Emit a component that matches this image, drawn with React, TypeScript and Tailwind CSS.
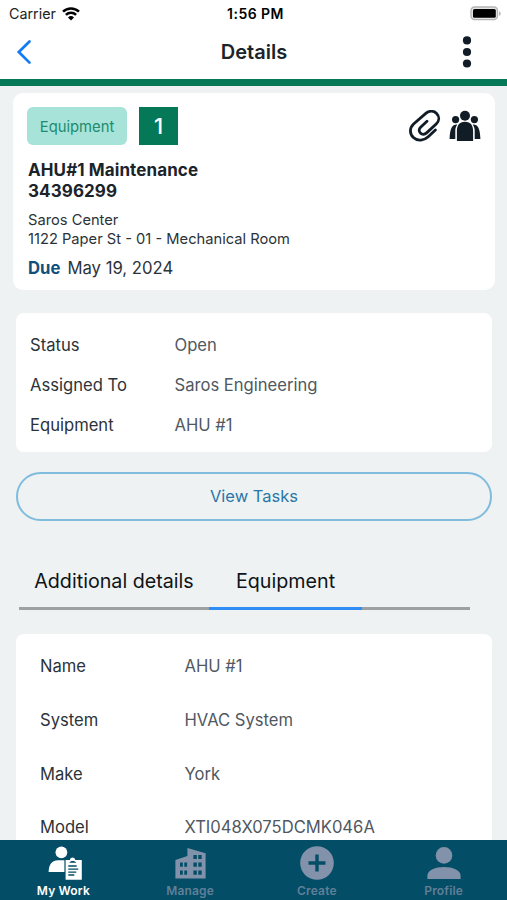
import React from "react";

const summary: [string, string][] = [
  ["Status", "Open"],
  ["Assigned To", "Saros Engineering"],
  ["Equipment", "AHU #1"],
];

const equipment: [string, string][] = [
  ["Name", "AHU #1"],
  ["System", "HVAC System"],
  ["Make", "York"],
  ["Model", "XTI048X075DCMK046A"],
];

function WifiIcon() {
  return (
    <svg className="h-[14px] w-[18px]" viewBox="0 0 18 14" fill="none" stroke="#000" strokeWidth="2.5">
      <path d="M1 4.7a11.4 11.4 0 0 1 16 0" />
      <path d="M3.9 7.9a7.3 7.3 0 0 1 10.2 0" />
      <path d="M9 13.4 6 10.4a4.3 4.3 0 0 1 6 0z" fill="#000" stroke="none" />
    </svg>
  );
}

function BatteryIcon() {
  return (
    <svg className="h-[15px] w-[32px]" viewBox="0 0 32 15">
      <rect x="1" y="1" width="26.5" height="12.6" rx="3.6" fill="#e4e4e4" stroke="#b4b4b4" strokeWidth="1.3" />
      <rect x="3" y="3" width="22.8" height="8.8" rx="1.6" fill="#000" />
      <path d="M29 5.2c2.2.8 2.2 3.8 0 4.6z" fill="#b4b4b4" />
    </svg>
  );
}

function PaperclipIcon() {
  return (
    <svg className="h-[33px] w-[33px]" viewBox="4 4 33 33" fill="none" stroke="#111c26" strokeWidth="2.8" strokeLinecap="round">
      <path d="M31.4 24 24.2 30.7C20.4 34.3 13.7 35.8 9.4 31.6C5.2 27.5 5.6 21.8 9.6 18L21.8 7.4C25.3 4.4 29.8 4.6 32.6 7.4C35.6 10.5 35.4 14.9 32.2 18L22.6 26.9C20.7 28.6 18 28.7 16.4 27.1C14.7 25.4 14.8 22.9 16.6 21.2L23 15.3" />
    </svg>
  );
}

function TeamIcon() {
  return (
    <svg className="h-[32px] w-[32px]" viewBox="0 0 32 32" fill="#111c26">
      <circle cx="16" cy="5.7" r="5" />
      <circle cx="6.6" cy="9.6" r="3.6" />
      <circle cx="25.4" cy="9.6" r="3.6" />
      <path d="M16 11.7c5.8 0 8.1 3.7 8.1 9.4V31H7.9v-9.9c0-5.7 2.3-9.4 8.1-9.4z" />
      <path d="M8.3 14.4C3.3 14.1.9 17.8.6 28.9h5.7v-8c0-2.8.7-4.6 2-6.5zM23.7 14.4c5-.3 7.4 3.4 7.7 14.5h-5.7v-8c0-2.8-.7-4.6-2-6.5z" />
    </svg>
  );
}

function WorkIcon() {
  return (
    <svg className="ml-[3px] h-[36px] w-[36px]" viewBox="0 0 36 36">
      <circle cx="14.4" cy="8.3" r="5.9" fill="#fff" />
      <path d="M1.6 28c0-7.5 3.6-11.8 9.4-11.8h7V28z" fill="#fff" />
      <path d="M17.4 14.7h17.7v21.8H17.4z" fill="#034d66" />
      <path d="M18.6 16h4.2c1-3.2 4.5-3.2 5.5 0h6.5v19.8H18.6z" fill="#fff" />
      <path d="M22.3 18.8c1.1-2.4 5.8-2.4 7 0z" fill="#034d66" />
      <path d="M21.3 22h8.4M21.3 25.1h10M21.3 28.1h8M21.3 31h6" fill="none" stroke="#034d66" strokeWidth="1.4" />
    </svg>
  );
}

function BuildingIcon() {
  return (
    <svg className="h-[36px] w-[36px]" viewBox="0 0 36 36">
      <path d="M3.4 34.6V16L15.4 12V4l18.2 5.2v25.4z" fill="#8292aa" />
      <path d="M8 18.6h2.8v4.2H8zM12.3 18.6h2.8v4.2h-2.8zM8 26.6h2.8v4.2H8zM12.3 26.6h2.8v4.2h-2.8zM21.4 11h3.4v4h-3.4zM26.3 11h3.4v4h-3.4zM21.4 18.6h3.4v4.2h-3.4zM26.3 18.6h3.4v4.2h-3.4zM21.4 26.6h3.4v4.2h-3.4zM26.3 26.6h3.4v4.2h-3.4z" fill="#034d66" />
    </svg>
  );
}

function CreateIcon() {
  return (
    <svg className="h-[36px] w-[36px]" viewBox="0 0 36 36">
      <circle cx="18" cy="19" r="16.8" fill="#8292aa" />
      <path d="M18 10.5v17M9.5 19h17" stroke="#034d66" strokeWidth="3.4" />
    </svg>
  );
}

function ProfileIcon() {
  return (
    <svg className="h-[36px] w-[36px]" viewBox="0 0 36 36" fill="#8292aa">
      <circle cx="18" cy="11.4" r="8.3" />
      <path d="M1.4 35v-3.3c0-5.5 8-8.7 16.6-8.7s16.6 3.2 16.6 8.7V35z" />
    </svg>
  );
}

function Rows({ items, height }: { items: [string, string][]; height: string }) {
  return (
    <>
      {items.map(([label, value]) => (
        <div key={label} className={`flex items-center text-[16.6px] ${height}`}>
          <span className="w-[144.5px] text-[#2b3339]">{label}</span>
          <span className="text-[#505861]">{value}</span>
        </div>
      ))}
    </>
  );
}

const tabs = [
  { label: "My Work", Icon: WorkIcon, active: true },
  { label: "Manage", Icon: BuildingIcon, active: false },
  { label: "Create", Icon: CreateIcon, active: false },
  { label: "Profile", Icon: ProfileIcon, active: false },
];

export default function App() {
  return (
    <div className="flex h-[900px] w-[507px] flex-col overflow-hidden bg-[#eef2f3] font-['Inter',sans-serif] text-[#1b232b]">
      <header className="h-[86px] shrink-0 border-b-[7px] border-[#047857] bg-white">
        <div className="grid h-[27px] grid-cols-3 items-center pl-[9px] pr-[5px]">
          <div className="flex items-center gap-[6px] text-[14.3px] text-[#222]">
            <span>Carrier</span>
            <WifiIcon />
          </div>
          <span className="text-center text-[14px] font-semibold tracking-[0.45px] text-black">1:56 PM</span>
          <div className="flex justify-end"><BatteryIcon /></div>
        </div>
        <div className="grid h-[50px] grid-cols-3 items-center pl-[16px] pr-[35px]">
          <svg className="h-[26px] w-[16px]" viewBox="0 0 16 26" fill="none" stroke="#117bf5" strokeWidth="2.7" strokeLinecap="round">
            <path d="M13.5 2.5 2.8 13l10.7 10.6" />
          </svg>
          <h1 className="pl-[20px] text-center text-[20px] font-semibold">Details</h1>
          <svg className="ml-auto h-[32px] w-[10px]" viewBox="0 0 10 32" fill="#111c26">
            <circle cx="5" cy="4.4" r="4.1" /><circle cx="5" cy="16" r="4.1" /><circle cx="5" cy="27.5" r="4.1" />
          </svg>
        </div>
      </header>

      <main className="flex min-h-0 flex-1 flex-col overflow-hidden">
        <section className="ml-[13px] mt-[7px] h-[197px] w-[482px] shrink-0 rounded-[10px] bg-white">
          <div className="flex h-[52px] items-end px-[14px]">
            <span className="flex h-[38px] w-[100px] items-center justify-center rounded-[6px] bg-[#a7e3d8] pt-[2px] text-[14.8px] text-[#208b70]">Equipment</span>
            <span className="ml-[12px] flex h-[38px] w-[39px] items-center justify-center bg-[#047857] text-[22px] font-medium text-white">1</span>
            <div className="ml-auto flex gap-[8px] pb-[2px]"><PaperclipIcon /><TeamIcon /></div>
          </div>
          <div className="pl-[15px]">
            <h2 className="mt-[15px] text-[17px] font-bold leading-[20.5px] tracking-[0.1px]">AHU#1 Maintenance<br />34396299</h2>
            <p className="mt-[10px] text-[14.7px] leading-[19px] text-[#2b3339]">Saros Center<br />1122 Paper St - 01 - Mechanical Room</p>
            <p className="mt-[8px] text-[16.7px] leading-[23px] text-[#2b3339]"><b className="mr-[7px] text-[#11507c]">Due</b>May 19, 2024</p>
          </div>
        </section>

        <section className="ml-[16px] mt-[23px] h-[139px] w-[476px] shrink-0 rounded-[8px] bg-white pl-[14px] pt-[12px]">
          <Rows items={summary} height="h-[40.3px]" />
        </section>

        <button className="ml-[16px] mt-[20px] h-[49px] w-[476px] shrink-0 rounded-full border-2 border-[#7fbcde] text-[16.5px] text-[#2977a8]">View Tasks</button>

        <div className="ml-[19px] mt-[34px] flex h-[55px] w-[451px] shrink-0 text-[19.7px] text-[#101417]">
          <div className="flex w-[190px] items-center justify-center border-b-[3px] border-[#9da1a3] pt-[2px]">Additional details</div>
          <div className="flex w-[153px] items-center justify-center border-b-[3px] border-[#2f8df5] pt-[2px]">Equipment</div>
          <div className="flex-1 border-b-[3px] border-[#9da1a3]" />
        </div>

        <section className="ml-[16px] mt-[24px] h-[230px] w-[476px] shrink-0 rounded-t-[8px] bg-white pl-[24px] pt-[5.6px]">
          <Rows items={equipment} height="h-[53.8px]" />
        </section>
      </main>

      <nav className="grid h-[60px] shrink-0 grid-cols-4 bg-[#034d66]">
        {tabs.map(({ label, Icon, active }) => (
          <div key={label} className={`flex flex-col items-center pt-[4px] text-[12px] font-semibold leading-[15px] tracking-[0.15px] ${active ? "text-white" : "text-[#607f98]"}`}>
            <Icon />
            <span className="mt-[3px]">{label}</span>
          </div>
        ))}
      </nav>
    </div>
  );
}
